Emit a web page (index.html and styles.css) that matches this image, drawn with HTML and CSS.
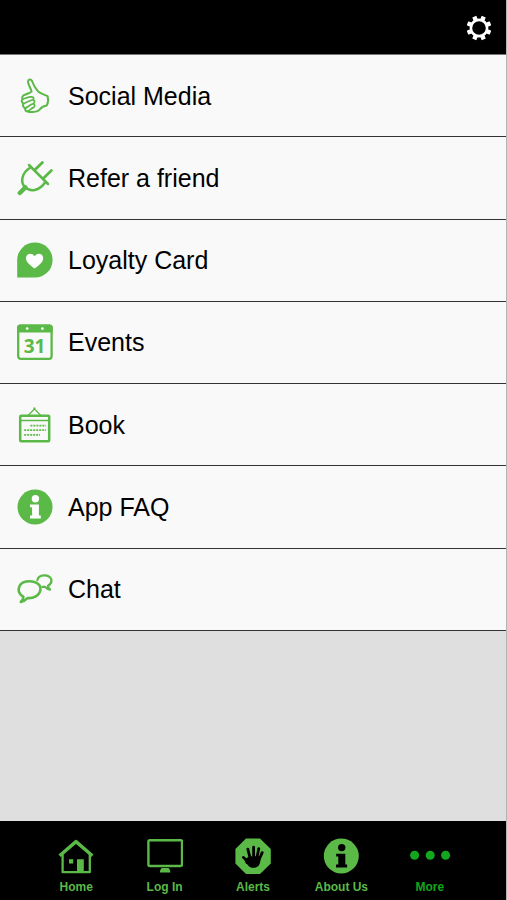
FILE: index.html
```html
<!DOCTYPE html>
<html lang="en">
<head>
<meta charset="utf-8">
<meta name="viewport" content="width=device-width, initial-scale=1">
<title>More</title>
<link rel="stylesheet" href="styles.css">
</head>
<body>
<div class="app">
  <header class="topbar">
    <button class="settings" type="button" aria-label="Settings">
      <svg class="gear" viewBox="0 0 26 26" aria-hidden="true">
        <g fill="#fff">
          <path id="tooth" d="M10.8 5.5V1.2Q10.8.6 11.4.6H14.6Q15.2.6 15.2 1.2V5.5Z" transform="rotate(22.5 13 13)"/>
          <use href="#tooth" transform="rotate(45 13 13)"/>
          <use href="#tooth" transform="rotate(90 13 13)"/>
          <use href="#tooth" transform="rotate(135 13 13)"/>
          <use href="#tooth" transform="rotate(180 13 13)"/>
          <use href="#tooth" transform="rotate(225 13 13)"/>
          <use href="#tooth" transform="rotate(270 13 13)"/>
          <use href="#tooth" transform="rotate(315 13 13)"/>
        </g>
        <circle cx="13" cy="13" r="8.1" fill="none" stroke="#fff" stroke-width="2.6"/>
      </svg>
    </button>
  </header>

  <main class="content">
    <nav class="menu" aria-label="More">
      <a class="row" href="#social">
        <svg class="icon line" viewBox="0 0 36 36" aria-hidden="true">
          <path stroke-width="2" d="M8.8 16.5C10.5 15.4 13 15.2 14.6 13.6C14 10.5 11.2 6.8 11 4C10.9 1.2 13.8.6 15 3C16.3 6.8 18.3 10.6 21.2 13.5C23.4 15.6 26 16 30.6 18.2C31.6 21.5 31.2 24.6 29.7 27.6C26.3 28.2 24.2 29.4 22.6 31.6C20.6 34 14.6 34.6 10.6 33.6C8.2 33 7.8 31.6 8.4 30.2C6.2 29.4 5.4 27.4 6.4 25.7C4.4 24.4 4.2 22.4 5.5 21.2C4.5 19 5.8 17.2 8.8 16.5Z"/>
          <path stroke-width="1.7" d="M5.5 21.2C8.5 20.4 11.5 18.6 14.8 18.8C17 19 17.4 21 15.5 21.8C12.6 22.8 9 24.4 6.4 25.7M15.5 22C18.2 22 18.2 25 16 25.8C13.2 26.8 10.8 28.8 8.4 30.2M16 26C18.4 26.2 18.2 28.8 16.2 29.6C14.4 30.4 13.2 32 10.6 33.2"/>
        </svg>
        <span>Social Media</span>
      </a>
      <a class="row" href="#refer">
        <svg class="icon line" viewBox="0 0 36 36" aria-hidden="true">
          <path stroke-width="2.5" d="M12 5L31 24M13.8 7.2C3.8 13.2 3.5 22.5 8 27.2C13 32.3 22.3 31.3 28.4 22"/>
          <path stroke-width="2.8" d="M18.2 9.6L25.4 2.4M27 17.8L34.4 10.6"/>
          <path stroke-width="4.4" d="M2.8 33L8.4 27.4"/>
        </svg>
        <span>Refer a friend</span>
      </a>
      <a class="row" href="#loyalty">
        <svg class="icon" viewBox="0 0 36 36" aria-hidden="true">
          <path fill="#5bb947" d="M.2 35.5V18A17.7 17.5 0 1 1 18 35.5Z"/>
          <path fill="#fff" d="M17.6 26.6C13.6 23.2 9 20 9 16.4C9 11.4 14.8 10.2 17.6 14.2C20.4 10.2 26.2 11.4 26.2 16.4C26.2 20 21.6 23.2 17.6 26.6Z"/>
        </svg>
        <span>Loyalty Card</span>
      </a>
      <a class="row" href="#events">
        <svg class="icon" viewBox="0 0 36 36" aria-hidden="true">
          <rect x="1.2" y="1.6" width="33.4" height="33.2" rx="2.5" fill="none" stroke="#5bb947" stroke-width="2.3"/>
          <path fill="#5bb947" d="M.1 8.4V3.5Q.1.6 3.1.6H32.7Q35.7.6 35.7 3.5V8.4Z"/>
          <circle cx="10.2" cy="4.6" r="1.4" fill="#f9f9f9"/>
          <circle cx="25.4" cy="4.6" r="1.4" fill="#f9f9f9"/>
          <text class="date" x="17.5" y="28.6">31</text>
        </svg>
        <span>Events</span>
      </a>
      <a class="row" href="#book">
        <svg class="icon line" viewBox="0 0 36 36" aria-hidden="true">
          <rect x="3.2" y="8.8" width="29" height="25.4" rx="1" stroke-width="2.5"/>
          <path stroke-width="1.5" d="M4 13.6H32"/>
          <path stroke-width="1.2" d="M11.6 8L17.4 2L23.4 8M16.8 1.2H18"/>
          <g class="dashes" stroke-width="1.8">
            <path d="M13.4 18.6H29"/>
            <path d="M7.2 23.2H29"/>
            <path d="M7.2 27.8H23"/>
          </g>
        </svg>
        <span>Book</span>
      </a>
      <a class="row" href="#faq">
        <svg class="icon" viewBox="0 0 36 36" aria-hidden="true">
          <circle cx="18" cy="18" r="17.5" fill="#5bb947"/>
          <circle cx="18.4" cy="9.8" r="3.7" fill="#fff"/>
          <path fill="#fff" d="M13 15.4H21.9V26.6H23.8V29.6H13V26.6H15.1V18.2H13Z"/>
        </svg>
        <span>App FAQ</span>
      </a>
      <a class="row" href="#chat">
        <svg class="icon line" viewBox="0 0 36 36" aria-hidden="true">
          <path stroke-width="2.6" d="M6.4 25.7C-.6 22 .2 12.4 9.2 10.6C17.4 9.1 24 13 23.4 18.6C22.8 24.6 16 27.6 10.4 27.1C8.8 28.8 6.8 30.5 3.8 31C5.4 29.4 6.4 27.6 6.4 25.7Z"/>
          <path stroke-width="2.3" d="M20.4 9C21.2 5.6 24.8 4.2 28 4.4C32.2 4.6 34.8 7.2 34.4 10.2C34.2 12.4 32.8 13.8 31 14.8C31 16.2 31.8 17.4 33 18.6C30.4 18.2 29 17 27.8 15.8L25.4 15.8"/>
        </svg>
        <span>Chat</span>
      </a>
    </nav>
  </main>

  <nav class="tabs" aria-label="Main">
    <a class="tab" href="#home">
      <svg class="icon line" viewBox="0 0 36 36" aria-hidden="true">
        <path stroke-width="3.4" d="M1.6 17.8L18 3.6L34.4 17.8" stroke-linecap="butt"/>
        <path stroke-width="2.3" d="M4.6 17V34.2H31.8V17"/>
        <path fill="#5bb947" stroke="none" d="M19 21.2H25.8V34.2H19ZM11 21.2H15.2V25.4H11Z"/>
      </svg>
      <span>Home</span>
    </a>
    <a class="tab" href="#login">
      <svg class="icon line" viewBox="0 0 36 36" aria-hidden="true">
        <rect x="1.4" y="2.2" width="33.6" height="25.8" rx="1.4" stroke-width="2.4"/>
        <path fill="#5bb947" stroke="none" d="M14.6 30H21.6Q23.4 31.6 23.4 34.6H12.8Q12.8 31.6 14.6 30Z"/>
      </svg>
      <span>Log In</span>
    </a>
    <a class="tab" href="#alerts">
      <svg class="icon" viewBox="0 0 36 36" aria-hidden="true">
        <path fill="#5bb947" d="M11 .4H25L35.8 11V25.4L25 36H11L.4 25.4V11Z"/>
        <path fill="#000" d="M11.5 25L9.5 21.4L14 18.5L23.6 18L25.6 20.2C25.4 26.5 23.3 29.8 18.2 29.8C14.6 29.8 13.2 27.8 11.5 25Z"/>
        <path fill="none" stroke="#000" stroke-width="2.8" stroke-linecap="round" d="M15.2 20.4L12.8 11.2M18.6 19V9.2M22 19.6L23.8 10.6M24 21.8L27.2 14.6M12 24.6C11.4 22 10.2 20.6 8.4 19.4"/>
      </svg>
      <span>Alerts</span>
    </a>
    <a class="tab" href="#about">
      <svg class="icon" viewBox="0 0 36 36" aria-hidden="true">
        <circle cx="18.3" cy="18" r="17.5" fill="#5bb947"/>
        <circle cx="18.7" cy="9.6" r="3.7" fill="#000"/>
        <path fill="#000" d="M13.2 15.8H22.3V26.6H24.1V29.6H13V26.6H15.3V18.4H13.2Z"/>
      </svg>
      <span>About Us</span>
    </a>
    <a class="tab active" href="#more" aria-current="page">
      <svg class="dots" viewBox="0 0 42 36" aria-hidden="true">
        <g fill="#12a71c">
          <circle cx="5.6" cy="17.3" r="4.5"/>
          <circle cx="21.2" cy="17.3" r="4.5"/>
          <circle cx="36.6" cy="17.3" r="4.5"/>
        </g>
      </svg>
      <span>More</span>
    </a>
  </nav>
</div>
</body>
</html>
```
FILE: styles.css
```css
* {
  box-sizing: border-box;
}

body {
  margin: 0;
  font-family: "Liberation Sans", Arial, sans-serif;
}

.app {
  display: flex;
  flex-direction: column;
  min-height: 100vh;
  border-right: 1px solid #b4b4b4;
  background: #dfdfdf;
}

.topbar {
  display: flex;
  align-items: center;
  justify-content: flex-end;
  height: 55px;
  padding: 2px 14px 0;
  border-bottom: 1px solid #777;
  background: #000;
}

.settings {
  display: flex;
  padding: 0;
  border: 0;
  background: none;
}

.gear {
  width: 26px;
  height: 26px;
}

.content {
  flex: 1;
}

.menu {
  display: grid;
  grid-auto-rows: 1fr;
  min-height: 64vh;
}

.row {
  display: flex;
  align-items: center;
  gap: 15px;
  padding: 0 17px;
  border-bottom: 1px solid #333;
  background: #f9f9f9;
  color: #000;
  font-size: 25px;
  line-height: 30px;
  text-decoration: none;
}

.icon {
  flex: none;
  width: 36px;
  height: 36px;
}

.line {
  fill: none;
  stroke: #5bb947;
  stroke-linecap: round;
  stroke-linejoin: round;
}

.dashes {
  stroke-dasharray: 2 1;
  stroke-linecap: butt;
}

.date {
  fill: #5bb947;
  font-family: "Open Sans", sans-serif;
  font-size: 19px;
  font-weight: 700;
  text-anchor: middle;
}

.tabs {
  display: grid;
  grid-template-columns: repeat(5, 1fr);
  height: 79px;
  padding: 17px 32px 0;
  background: #000;
}

.tab {
  display: flex;
  flex-direction: column;
  align-items: center;
  gap: 5px;
  color: #5bb947;
  font-size: 12px;
  font-weight: 700;
  line-height: 16px;
  text-decoration: none;
  white-space: nowrap;
}

.active {
  color: #12a71c;
}

.dots {
  width: 42px;
  height: 36px;
}
```
